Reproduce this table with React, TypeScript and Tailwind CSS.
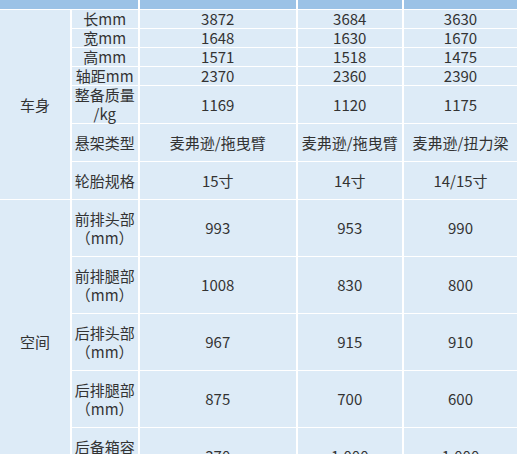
import React from 'react';

const cell = 'bg-[#ddebf7] flex items-center justify-center text-center leading-[19px]';

type Row = { label: React.ReactNode; values: string[] };

const bodyRows: Row[] = [
  { label: '长mm', values: ['3872', '3684', '3630'] },
  { label: '宽mm', values: ['1648', '1630', '1670'] },
  { label: '高mm', values: ['1571', '1518', '1475'] },
  { label: '轴距mm', values: ['2370', '2360', '2390'] },
  { label: <>整备质量<br />/kg</>, values: ['1169', '1120', '1175'] },
  { label: '悬架类型', values: ['麦弗逊/拖曳臂', '麦弗逊/拖曳臂', '麦弗逊/扭力梁'] },
  { label: '轮胎规格', values: ['15寸', '14寸', '14/15寸'] },
];

const spaceRows: Row[] = [
  { label: <>前排头部<br />（mm）</>, values: ['993', '953', '990'] },
  { label: <>前排腿部<br />（mm）</>, values: ['1008', '830', '800'] },
  { label: <>后排头部<br />（mm）</>, values: ['967', '915', '910'] },
  { label: <>后排腿部<br />（mm）</>, values: ['875', '700', '600'] },
  { label: <>后备箱容<br />积（L）</>, values: ['370', '1,000', '1,000'] },
];

export default function App() {
  return (
    <div
      className="w-[517px] h-[454px] overflow-hidden bg-white text-[15px] text-[#333]"
      style={{ fontFamily: '"Noto Sans CJK SC", "Noto Sans", sans-serif' }}
    >
      <div className="grid gap-[1.5px] bg-white grid-cols-[70px_66.5px_156.5px_104.5px_114px] grid-rows-[8.5px_repeat(4,17.5px)_repeat(3,36.5px)_repeat(5,55.5px)]">
        {/* header strip */}
        <div className="col-span-2 bg-[#9bc2e6]" />
        <div className="bg-[#9bc2e6]" />
        <div className="bg-[#9bc2e6]" />
        <div className="bg-[#9bc2e6]" />

        <div className={`${cell} row-span-7`}>车身</div>
        {bodyRows.map((r, i) => (
          <React.Fragment key={`b${i}`}>
            <div className={cell}>{r.label}</div>
            {r.values.map((v, j) => (
              <div key={j} className={cell}>{v}</div>
            ))}
          </React.Fragment>
        ))}

        <div className={`${cell} row-span-5`}>空间</div>
        {spaceRows.map((r, i) => (
          <React.Fragment key={`s${i}`}>
            <div className={cell}>{r.label}</div>
            {r.values.map((v, j) => (
              <div key={j} className={cell}>{v}</div>
            ))}
          </React.Fragment>
        ))}
      </div>
    </div>
  );
}
